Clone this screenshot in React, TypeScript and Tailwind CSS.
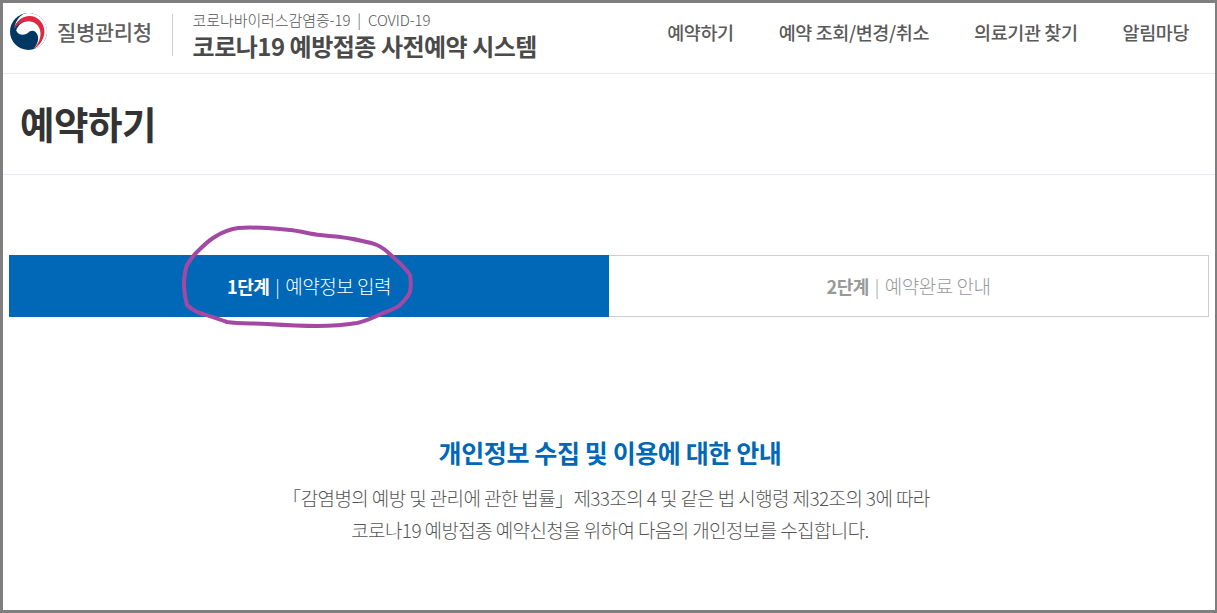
const FONT = "font-['Noto_Sans_CJK_KR','Noto_Sans',sans-serif]";

const navItems = ['예약하기', '예약 조회/변경/취소', '의료기관 찾기', '알림마당'];

function Logo() {
  return (
    <svg width="37" height="37" viewBox="0 0 36 36" className="shrink-0">
      <circle cx="18" cy="18" r="18" fill="#003763" />
      {/* white rim and red arc of the taegeuk mark */}
      <path d="M18 0A18 18 0 0 1 23 35.300C29.500 30 33 24 32 17C31 9 25 4 18 4C12 4 6 8 4 15C6 6 11 0 18 0Z" fill="#fff" />
      <path d="M4 16C6 8 12 3 19 3C27 3 33.500 10 33.500 18C33.500 25 29 32 23 35C28 29 30 24 29.500 19C28 12 24 8 18 8C12 8 7 11 4 16Z" fill="#e2273f" />
      <path d="M6 17C8 11 13 8 18 8C24 8 29 12 29.700 19C30 24 28 30 23 35C27 30 28 26 27 22C26 18 22 16 19 18C16 21 12 22 9 20.500C8 20 7 18.500 6 17Z" fill="#fff" />
    </svg>
  );
}

export default function App() {
  return (
    <div className={`relative h-[613px] w-[1217px] overflow-hidden border-[3px] border-r-2 border-[#7f7f7f] bg-white ${FONT}`}>
      <header className="flex h-[71px] items-center border-b border-[#e9e9f1] pl-[7px] pr-[26px]">
        <div className="flex items-center gap-[10px] pb-[13px]">
          <Logo />
          <span className="text-[21px] font-medium tracking-[-0.4px] text-[#5f5f5f]">질병관리청</span>
        </div>
        <div className="mb-[6px] ml-[20px] mr-5 h-[42px] w-px bg-[#cfcfcf]" />
        <div className="mb-[6px] flex flex-col">
          <span className="text-[15px] leading-[22px] font-light tracking-[-0.1px] text-[#555]">
            코로나바이러스감염증-19<span className="mx-[7px]">|</span>COVID-19
          </span>
          <span className="text-[24px] leading-[30px] font-bold tracking-[-0.5px] text-[#4a4a4a]">
            코로나19 예방접종 사전예약 시스템
          </span>
        </div>
        <nav className="ml-auto flex gap-[45px] pb-[10px]">
          {navItems.map((item) => (
            <a key={item} className="text-[18.500px] font-medium tracking-[-0.4px] text-[#5a5a5a]">{item}</a>
          ))}
        </nav>
      </header>

      <div className="flex h-[101px] items-center border-b border-[#e9e9f1] pl-[17px] pb-[2px]">
        <h1 className="text-[37.500px] font-bold tracking-[-0.5px] text-[#333]">예약하기</h1>
      </div>

      <div className="mt-[80px] flex px-[6px]">
        <div className="flex h-[62px] w-[600px] items-center justify-center bg-[#0068b7] text-white">
          <span className="text-[19px] tracking-[-0.5px] font-light">
            <b className="text-[18px] font-bold">1단계</b><span className="mx-[6px] text-[18px]">|</span>예약정보 입력
          </span>
        </div>
        <div className="flex h-[62px] flex-1 items-center justify-center border border-l-0 border-[#cfcfcf] text-[#999]">
          <span className="text-[19px] tracking-[-0.5px] font-light">
            <b className="text-[18px] font-bold">2단계</b><span className="mx-[6px] text-[18px]">|</span>예약완료 안내
          </span>
        </div>
      </div>

      <section className="mt-[116px] flex flex-col items-center pl-[2px]">
        <h2 className="text-[25px] leading-[38px] font-bold tracking-[-0.4px] text-[#0068b7]">개인정보 수집 및 이용에 대한 안내</h2>
        <p className="mt-[11px] text-center text-[19px] leading-[32px] font-light tracking-[-0.6px] text-[#555]">
          「감염병의 예방 및 관리에 관한 법률」제33조의 4 및 같은 법 시행령 제32조의 3에 따라<span className="inline-block w-[8px]" />
          <br />
          코로나19 예방접종 예약신청을 위하여 다음의 개인정보를 수집합니다.
        </p>
      </section>

      {/* hand drawn marker annotation */}
      <svg className="pointer-events-none absolute left-[-3px] top-[-3px]" width="1217" height="613" fill="none">
        <path
          d="M213 238C222 232 230 229 238 228C250 227 270 228 290 230C300 231 310 234 320 235C332 236 342 237 353 239C362 241 370 242 377 245C384 248 388 252 393 257C400 263 406 269 410 275C411 281 411 287 410 292C408 297 404 301 400 305C395 309 389 311 383 313C375 317 366 321 357 323C345 325 330 326 317 326C300 326 283 325 267 324C254 323 240 324 227 322C216 318 206 315 197 312C193 310 190 308 187 305C185 298 184 292 184 285C184 278 185 271 187 265C190 260 193 256 197 252C202 247 207 242 213 238Z"
          stroke="#a349a4"
          strokeWidth="4"
        />
      </svg>
    </div>
  );
}
